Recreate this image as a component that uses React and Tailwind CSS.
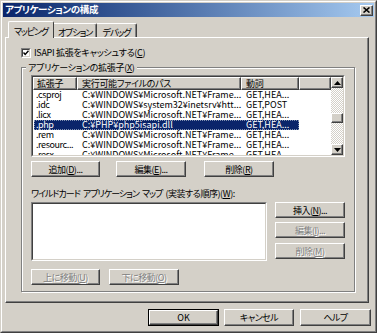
const raised =
  "bg-[#d4d0c8] border border-t-white border-l-white border-r-[#404040] border-b-[#404040] shadow-[inset_-1px_-1px_#808080]";
const sunkenOuter =
  "border border-t-[#808080] border-l-[#808080] border-r-white border-b-white";
const sunkenInner =
  "border border-t-[#404040] border-l-[#404040] border-r-[#d4d0c8] border-b-[#d4d0c8] bg-white";
const disabledText = "text-[#808080] [text-shadow:1px_1px_0_#ffffff]";

function Btn({ children, w = "w-[70px]", disabled = false, h = "h-[16px]" }) {
  return (
    <div className={`${w} ${h} shrink-0 flex items-center justify-center whitespace-nowrap tracking-[-0.5px] ${raised}`}>
      <span className={disabled ? disabledText : ""}>{children}</span>
    </div>
  );
}

function Arrow({ up }) {
  return (
    <svg width="7" height="4" viewBox="0 0 7 4">
      {up ? <polygon points="3.5,0 7,4 0,4" fill="#000" /> : <polygon points="0,0 7,0 3.5,4" fill="#000" />}
    </svg>
  );
}

const rows = [
  [".csproj", "C:¥WINDOWS¥Microsoft.NET¥Frame...", "GET,HEA..."],
  [".idc", "C:¥WINDOWS¥system32¥inetsrv¥htt...", "GET,POST"],
  [".licx", "C:¥WINDOWS¥Microsoft.NET¥Frame...", "GET,HEA..."],
  [".php", "C:¥PHP¥php5isapi.dll", "GET,HEA..."],
  [".rem", "C:¥WINDOWS¥Microsoft.NET¥Frame...", "GET,HEA..."],
  [".resourc...", "C:¥WINDOWS¥Microsoft.NET¥Frame...", "GET,HEA..."],
  [".resx", "C:¥WINDOWS¥Microsoft.NET¥Frame...", "GET,HEA..."],
];

export default function App() {
  return (
    <div className="w-[377px] h-[333px] bg-[#d4d0c8] border border-t-[#d4d0c8] border-l-[#d4d0c8] border-r-[#404040] border-b-[#404040] font-[family-name:'Noto_Sans_CJK_JP',sans-serif] [font-feature-settings:'palt'] text-[9px] leading-none text-black overflow-hidden">
      <div className="h-full border border-t-white border-l-white border-r-[#808080] border-b-[#808080] p-px flex flex-col">
        {/* title bar */}
        <div className="h-[14px] shrink-0 flex items-center bg-linear-to-r from-[#0a246a] to-[#a6caf0] pl-[2px] pr-px">
          <span className="text-white font-bold text-[9.5px] tracking-[-0.4px]">アプリケーションの構成</span>
          <div className={`ml-auto w-[13px] h-[11px] flex items-center justify-center ${raised}`}>
            <svg width="7" height="6" viewBox="0 0 7 6">
              <path d="M0.5 0.5 L6.5 5.5 M6.5 0.5 L0.5 5.5" stroke="#000" strokeWidth="1.6" />
            </svg>
          </div>
        </div>

        {/* tabs */}
        <div className="mt-[4px] ml-[5px] h-[17px] flex items-end shrink-0 whitespace-nowrap tracking-[-1.1px]">
          <div className="relative z-10 h-[17px] w-[46px] flex items-start justify-center pt-[5px] bg-[#d4d0c8] border-t border-l border-r border-t-white border-l-white border-r-[#404040] rounded-tl-[2px] rounded-tr-[2px]">
            マッピング
          </div>
          <div className="h-[15px] w-[43px] flex items-start justify-center pt-[4px] bg-[#d4d0c8] border-t border-r border-t-white border-r-[#404040] shadow-[inset_-1px_0_#808080] rounded-tr-[2px]">
            オプション
          </div>
          <div className="h-[15px] w-[40px] flex items-start justify-center pt-[4px] bg-[#d4d0c8] border-t border-r border-t-white border-r-[#404040] shadow-[inset_-1px_0_#808080] rounded-tr-[2px]">
            デバッグ
          </div>
        </div>

        {/* tab panel */}
        <div className={`-mt-px ml-[2px] w-[364px] h-[266px] shrink-0 flex flex-col ${raised}`}>
          {/* checkbox row */}
          <div className="mt-[9px] ml-[15px] h-[11px] flex items-center">
            <div className={`w-[10px] h-[10px] ${sunkenOuter}`}>
              <div className={`w-full h-full flex items-center justify-center ${sunkenInner}`}>
                <svg width="6" height="6" viewBox="0 0 6 6">
                  <path d="M0.5 2.5 L2.2 4.5 L5.5 0.8" stroke="#000" strokeWidth="1.4" fill="none" />
                </svg>
              </div>
            </div>
            <span className="ml-[3px] tracking-[-0.3px]">
              ISAPI 拡張をキャッシュする(<u>C</u>)
            </span>
          </div>

          {/* group box */}
          <div className="relative mt-[9px] ml-[15px] w-[334px] h-[225px] border border-[#808080] shadow-[inset_1px_1px_#ffffff,1px_1px_#ffffff] flex flex-col px-[9px] pt-[7px]">
            <span className="absolute -top-[6px] left-[4px] bg-[#d4d0c8] px-[2px] leading-[11px] tracking-[-0.3px]">
              アプリケーションの拡張子(<u>X</u>)
            </span>

            {/* list view */}
            <div className={`w-[314px] h-[82px] shrink-0 ${sunkenOuter}`}>
              <div className={`w-full h-full flex ${sunkenInner}`}>
                <div className="flex-1 overflow-hidden flex flex-col">
                  <div className="h-[13px] shrink-0 flex whitespace-nowrap tracking-[-0.3px]">
                    <div className={`w-[44px] h-full flex items-center pl-[3px] ${raised}`}>拡張子</div>
                    <div className={`w-[164px] h-full flex items-center pl-[4px] ${raised}`}>実行可能ファイルのパス</div>
                    <div className={`w-[58px] h-full flex items-center pl-[4px] ${raised}`}>動詞</div>
                    <div className={`w-[32px] h-full ${raised}`}></div>
                  </div>
                  {rows.map((r, i) => (
                    <div key={i} className="h-[10px] shrink-0 flex whitespace-nowrap leading-[10px]">
                      <div
                        className={`ml-px w-[265px] h-[10px] flex ${
                          i === 3 ? "bg-[#0a246a] text-white outline-1 outline-dotted outline-[#8090b0] -outline-offset-1" : ""
                        }`}
                      >
                        <div className="w-[43px] shrink-0 pl-[2px] tracking-[-0.4px]">{r[0]}</div>
                        <div className="w-[164px] shrink-0 pl-[5px]">{r[1]}</div>
                        <div className="w-[58px] shrink-0 pl-[5px]">{r[2]}</div>
                      </div>
                    </div>
                  ))}
                </div>
                {/* scrollbar */}
                <div className="w-[12px] shrink-0 flex flex-col">
                  <div className={`h-[11px] shrink-0 flex items-center justify-center ${raised}`}>
                    <Arrow up />
                  </div>
                  <div className="h-[25px] shrink-0 bg-[image:repeating-conic-gradient(#ffffff_0%_25%,#d4d0c8_0%_50%)] bg-[length:2px_2px]"></div>
                  <div className={`h-[10px] shrink-0 ${raised}`}></div>
                  <div className="flex-1 bg-[image:repeating-conic-gradient(#ffffff_0%_25%,#d4d0c8_0%_50%)] bg-[length:2px_2px]"></div>
                  <div className={`h-[11px] shrink-0 flex items-center justify-center ${raised}`}>
                    <Arrow />
                  </div>
                </div>
              </div>
            </div>

            {/* list buttons */}
            <div className="mt-[4px] flex shrink-0">
              <Btn w="w-[69px]">追加(<u>D</u>)...</Btn>
              <div className="ml-[16px]">
                <Btn>編集(<u>E</u>)...</Btn>
              </div>
              <div className="ml-[18px]">
                <Btn>削除(<u>R</u>)</Btn>
              </div>
            </div>

            <div className="mt-[10px] h-[12px] flex items-center shrink-0 whitespace-nowrap [word-spacing:2px]">
              <span className="tracking-[-1px]">ワイルドカード アプリケーション マップ </span>
              <span className="ml-[3px] tracking-[-0.45px]">
                (実装する順序)(<u>W</u>):
              </span>
            </div>

            {/* wildcard row */}
            <div className="mt-[3px] h-[59px] flex shrink-0">
              <div className={`w-[236px] h-full ${sunkenOuter}`}>
                <div className={`w-full h-full ${sunkenInner}`}></div>
              </div>
              <div className="ml-[8px] flex flex-col">
                <Btn>挿入(<u>N</u>)...</Btn>
                <div className="mt-[4px]">
                  <Btn disabled>編集(<u>I</u>)...</Btn>
                </div>
                <div className="mt-[5px]">
                  <Btn disabled>削除(<u>M</u>)</Btn>
                </div>
              </div>
            </div>

            <div className="mt-[8px] flex shrink-0">
              <Btn w="w-[69px]" disabled>
                上に移動(<u>U</u>)
              </Btn>
              <div className="ml-[9px]">
                <Btn disabled>
                  下に移動(<u>O</u>)
                </Btn>
              </div>
            </div>
          </div>
        </div>

        {/* footer */}
        <div className="mt-[6px] flex justify-end pr-[3px] shrink-0">
          <div className="w-[71px] h-[17px] border border-black">
            <div className={`w-full h-full flex items-center justify-center ${raised}`}>OK</div>
          </div>
          <div className="ml-[5px]">
            <Btn h="h-[17px]">キャンセル</Btn>
          </div>
          <div className="ml-[6px]">
            <Btn w="w-[71px]" h="h-[17px]">ヘルプ</Btn>
          </div>
        </div>
      </div>
    </div>
  );
}
